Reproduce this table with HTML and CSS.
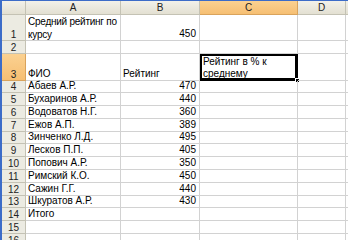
FILE: index.html
```html
<!DOCTYPE html>
<html lang="ru">
<head>
<meta charset="utf-8">
<title>Рейтинг</title>
<link rel="stylesheet" href="styles.css">
</head>
<body>
<div class="frame">
  <div class="sheet">
    <div class="corner"></div>
    <div class="colhdr">A</div>
    <div class="colhdr">B</div>
    <div class="colhdr sel">C</div>
    <div class="colhdr">D</div>
    <div class="colhdr"></div>

    <div class="rowhdr">1</div>
    <div class="cell wrap tight">Средний рейтинг по<br>курсу</div>
    <div class="cell num">450</div>
    <div class="cell"></div>
    <div class="cell"></div>
    <div class="cell"></div>

    <div class="rowhdr">2</div>
    <div class="cell"></div><div class="cell"></div><div class="cell"></div><div class="cell"></div><div class="cell"></div>

    <div class="rowhdr sel">3</div>
    <div class="cell">ФИО</div>
    <div class="cell">Рейтинг</div>
    <div class="cell wrap active">Рейтинг в % к<br>среднему<span class="handle"></span></div>
    <div class="cell"></div>
    <div class="cell"></div>

    <div class="rowhdr">4</div><div class="cell">Абаев А.Р.</div><div class="cell num">470</div><div class="cell"></div><div class="cell"></div><div class="cell"></div>
    <div class="rowhdr">5</div><div class="cell">Бухаринов А.Р.</div><div class="cell num">440</div><div class="cell"></div><div class="cell"></div><div class="cell"></div>
    <div class="rowhdr">6</div><div class="cell">Водоватов Н.Г.</div><div class="cell num">360</div><div class="cell"></div><div class="cell"></div><div class="cell"></div>
    <div class="rowhdr">7</div><div class="cell">Ежов А.П.</div><div class="cell num">389</div><div class="cell"></div><div class="cell"></div><div class="cell"></div>
    <div class="rowhdr">8</div><div class="cell">Зинченко Л.Д.</div><div class="cell num">495</div><div class="cell"></div><div class="cell"></div><div class="cell"></div>
    <div class="rowhdr">9</div><div class="cell">Лесков П.П.</div><div class="cell num">405</div><div class="cell"></div><div class="cell"></div><div class="cell"></div>
    <div class="rowhdr">10</div><div class="cell">Попович А.Р.</div><div class="cell num">350</div><div class="cell"></div><div class="cell"></div><div class="cell"></div>
    <div class="rowhdr">11</div><div class="cell">Римский К.О.</div><div class="cell num">450</div><div class="cell"></div><div class="cell"></div><div class="cell"></div>
    <div class="rowhdr">12</div><div class="cell">Сажин Г.Г.</div><div class="cell num">440</div><div class="cell"></div><div class="cell"></div><div class="cell"></div>
    <div class="rowhdr">13</div><div class="cell">Шкуратов А.Р.</div><div class="cell num">430</div><div class="cell"></div><div class="cell"></div><div class="cell"></div>
    <div class="rowhdr">14</div><div class="cell">Итого</div><div class="cell"></div><div class="cell"></div><div class="cell"></div><div class="cell"></div>
    <div class="rowhdr">15</div><div class="cell"></div><div class="cell"></div><div class="cell"></div><div class="cell"></div><div class="cell"></div>
    <div class="rowhdr">16</div><div class="cell"></div><div class="cell"></div><div class="cell"></div><div class="cell"></div><div class="cell"></div>
  </div>
</div>
</body>
</html>
```
FILE: styles.css
```css
html, body {
  margin: 0;
  padding: 0;
  background: #ffffff;
}

body {
  width: 348px;
  height: 240px;
  overflow: hidden;
  font-family: "Liberation Sans", Arial, sans-serif;
  font-size: 10px;
  color: #000;
}

.frame {
  border-top: 1px solid #3c6cc8;
  border-left: 2px solid #3c6cc8;
  height: 239px;
  overflow: hidden;
}

.sheet {
  display: grid;
  grid-template-columns: 24px 95px 79px 98px 48px 40px;
  grid-template-rows: 14px 26px 12.5px 27px repeat(13, 12.8px);
}

.corner,
.colhdr,
.rowhdr {
  background: linear-gradient(#f2f1ea, #e3e0d2);
  border-right: 1px solid #c4c2b4;
  border-bottom: 1px solid #c4c2b4;
  color: #222;
  box-sizing: border-box;
}

.colhdr {
  display: flex;
  align-items: center;
  justify-content: center;
  padding-bottom: 1px;
}

.rowhdr {
  display: flex;
  align-items: flex-end;
  justify-content: center;
  line-height: 11px;
  padding-bottom: 0;
  background: #ecebe2;
}

.colhdr.sel,
.rowhdr.sel {
  background: linear-gradient(#fbd191, #f6bf73);
  border-color: #d9a35c;
}

.cell {
  position: relative;
  box-sizing: border-box;
  border-right: 1px solid #d2d2d2;
  border-bottom: 1px solid #d2d2d2;
  display: flex;
  align-items: flex-end;
  padding: 0 2px 0 2px;
  line-height: 12px;
  white-space: nowrap;
}

.cell.wrap {
  display: block;
  padding-top: 1px;
  line-height: 12.5px;
}

.cell.tight {
  letter-spacing: -0.25px;
}

.cell.num {
  justify-content: flex-end;
  padding-right: 3px;
}

.cell.active {
  box-shadow: inset 0 0 0 2px #000;
  border-color: #000;
  overflow: visible;
  padding-left: 3px;
  padding-top: 2px;
}

.handle {
  position: absolute;
  right: -3px;
  bottom: -3px;
  width: 5px;
  height: 5px;
  background: #000;
  border: 1px solid #fff;
  box-sizing: border-box;
}
```
